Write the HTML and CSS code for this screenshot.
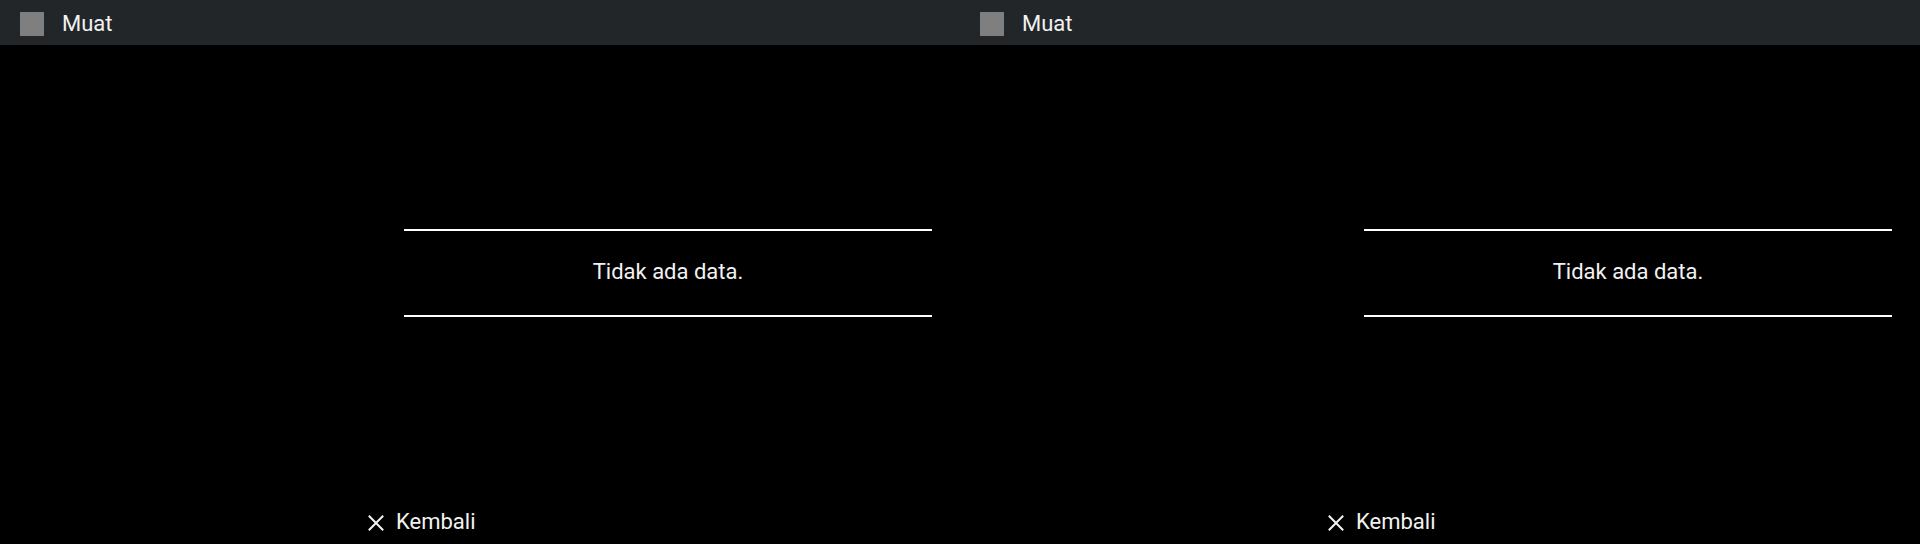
FILE: index.html
```html
<!DOCTYPE html>
<html lang="id">
<head>
<meta charset="utf-8">
<title>Muat</title>
<link rel="stylesheet" href="styles.css">
</head>
<body>
<div class="screen">
  <section class="panel">
    <header class="bar">
      <span class="bar-icon"></span>
      <span class="bar-title">Muat</span>
    </header>
    <main class="content">
      <div class="table">
        <div class="empty">Tidak ada data.</div>
      </div>
    </main>
    <footer class="actions">
      <button class="back" type="button">
        <svg class="back-icon" viewBox="0 0 16 16" width="16" height="16" aria-hidden="true">
          <path d="M0.8 0.8 L15.2 15.2 M15.2 0.8 L0.8 15.2" stroke="#f2f2f2" stroke-width="2" fill="none" stroke-linecap="butt"/>
        </svg>
        <span>Kembali</span>
      </button>
    </footer>
  </section>
  <section class="panel">
    <header class="bar">
      <span class="bar-icon"></span>
      <span class="bar-title">Muat</span>
    </header>
    <main class="content">
      <div class="table">
        <div class="empty">Tidak ada data.</div>
      </div>
    </main>
    <footer class="actions">
      <button class="back" type="button">
        <svg class="back-icon" viewBox="0 0 16 16" width="16" height="16" aria-hidden="true">
          <path d="M0.8 0.8 L15.2 15.2 M15.2 0.8 L0.8 15.2" stroke="#f2f2f2" stroke-width="2" fill="none" stroke-linecap="butt"/>
        </svg>
        <span>Kembali</span>
      </button>
    </footer>
  </section>
</div>
</body>
</html>
```
FILE: styles.css
```css
html, body {
  margin: 0;
  padding: 0;
  background: #000;
}

body {
  font-family: Roboto, "Liberation Sans", sans-serif;
  color: #f2f2f2;
  font-size: 22px;
  line-height: 24px;
}

.screen {
  display: flex;
  width: 1920px;
  height: 544px;
  overflow: hidden;
}

.panel {
  width: 960px;
  height: 544px;
  display: flex;
  flex-direction: column;
}

.bar {
  height: 45px;
  box-sizing: border-box;
  padding: 3px 0 0 20px;
  background: #222628;
  display: flex;
  align-items: center;
  gap: 18px;
}

.bar-icon {
  width: 24px;
  height: 24px;
  background: #7f7f7f;
}

.bar-title {
  color: #f2f2f2;
}

.content {
  flex: 1;
  padding-top: 184px;
  display: flex;
  justify-content: flex-end;
  align-items: flex-start;
  padding-right: 28px;
}

.table {
  width: 528px;
  border-top: 2px solid #fff;
  border-bottom: 2px solid #fff;
}

.empty {
  height: 84px;
  line-height: 82px;
  text-align: center;
}

.actions {
  display: flex;
  padding: 0 0 10px 368px;
}

.back {
  display: flex;
  align-items: center;
  gap: 12px;
  background: none;
  border: 0;
  padding: 0;
  color: #f2f2f2;
  font: inherit;
  line-height: 24px;
}

.back-icon {
  display: block;
  margin-top: 2px;
}
```
